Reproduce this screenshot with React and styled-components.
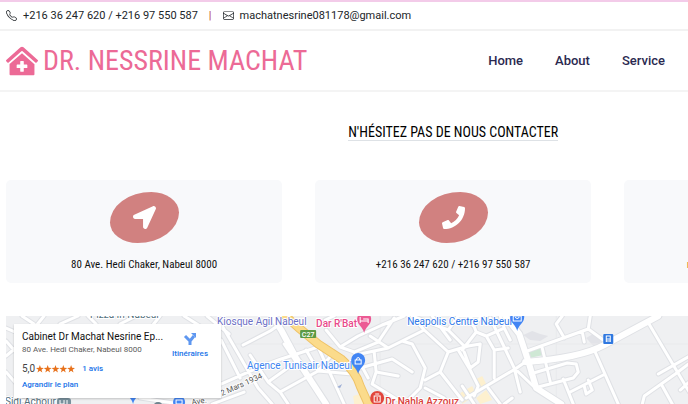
import React from "react";
import styled, { createGlobalStyle } from "styled-components";
import { FaClinicMedical, FaLocationArrow, FaPhone, FaEnvelope } from "react-icons/fa";
import { BsTelephone, BsEnvelope } from "react-icons/bs";

const condensed = `"Roboto Condensed", "Liberation Sans Narrow", Roboto, sans-serif`;

const GlobalStyle = createGlobalStyle`
  *, *::before, *::after { box-sizing: border-box; }
  body { margin: 0; background: #fff; color: #111; font-family: Roboto, sans-serif; }
  a { color: inherit; text-decoration: none; }
`;

const Page = styled.div`
  overflow: hidden;
  border-top: 2px solid #f3cbe9;
`;

const TopBar = styled.address`
  display: flex;
  align-items: center;
  height: 29px;
  padding: 0 6px;
  border-bottom: 2px solid #f2f2f2;
  font-size: 11px;
  font-style: normal;
  color: #212529;
  white-space: nowrap;
`;

const ContactLink = styled.a`
  display: flex;
  align-items: center;
  gap: 6px;
`;

const Divider = styled.span`
  margin: 0 11px;
  color: #b5443c;
`;

const Header = styled.header`
  display: flex;
  align-items: center;
  height: 61px;
  padding: 0 6px;
  border-bottom: 2px solid #f4f4f4;
  white-space: nowrap;
`;

const Brand = styled.a`
  display: flex;
  flex: 0 0 auto;
  align-items: center;
  gap: 5px;
  color: #ec6a96;
  font-family: ${condensed};
  font-size: 28px;
  line-height: 36px;
`;

const Nav = styled.nav`
  display: flex;
  gap: 32px;
  margin-left: auto;
  padding-right: 17px;
  color: #2b2950;
  font-size: 13px;
  font-weight: 500;
`;

const Content = styled.main`
  width: 130vw;
  margin-left: 6px;
`;

const Title = styled.h1`
  width: fit-content;
  margin: 32px auto 39px;
  border-bottom: 1px solid #dee2e6;
  font-family: ${condensed};
  font-size: 14px;
  font-weight: 400;
  line-height: 16px;
  color: #000;
`;

const Cards = styled.div`
  display: grid;
  grid-template-columns: repeat(3, 1fr);
  gap: 33px;
`;

const Card = styled.a`
  display: flex;
  flex-direction: column;
  align-items: center;
  gap: 14px;
  padding: 12px 12px 11px;
  border-radius: 5px;
  background: #f8f9fb;
  color: ${(p) => p.$color || "#111"};
  font-family: ${condensed};
  font-size: 11px;
  line-height: 15px;
`;

const Blob = styled.span`
  display: flex;
  align-items: center;
  justify-content: center;
  width: 69px;
  height: 51px;
  border-radius: 60% 40%;
  background: #d18180;
  color: #fff;
  font-size: 23px;
`;

const MapFrame = styled.section`
  position: relative;
  margin-top: 33px;
  background: #eff0f2;
`;

const MapArt = styled.svg`
  display: block;
  width: 100%;
  height: 88px;
  font-family: Roboto, sans-serif;
  font-size: 10px;
  font-weight: 400;
`;

const PlaceCard = styled.div`
  position: absolute;
  top: 8px;
  left: 8px;
  display: flex;
  justify-content: space-between;
  width: 207px;
  height: 74px;
  padding: 6px 13px 0 8px;
  background: #fff;
  box-shadow: 0 1px 2px rgba(0, 0, 0, 0.2);
  font-size: 8px;
  white-space: nowrap;
`;

const PlaceName = styled.h2`
  margin: 0;
  color: #111;
  font-size: 10px;
  font-weight: 400;
  line-height: 13px;
`;

const PlaceText = styled.p`
  margin: 0;
  color: #5b5b5b;
  line-height: 14px;
`;

const Rating = styled.div`
  display: flex;
  align-items: center;
  margin-top: 4px;
  color: #444;
  font-size: 10px;
  line-height: 16px;
`;

const Stars = styled.svg`
  width: 39px;
  height: 8px;
  margin: 0 7px 0 1px;
  fill: #e7711b;
`;

const MapLink = styled.a`
  color: #1a73e8;
  font-size: 8px;
  font-weight: 500;
  line-height: 16px;
`;

const Directions = styled(MapLink)`
  display: flex;
  flex-direction: column;
  align-items: center;
  padding-top: 2px;
`;

const STAR = "M4 0 5 2.8 8 2.9 5.6 4.7 6.5 7.6 4 5.9 1.5 7.6 2.4 4.7 0 2.9 3 2.8Z";

const minorRoads = [
  "M6 356L24 341 44 316M22 316L34 324M60 324L78 316M6 341L28 366 16 404M6 372L34 404",
  "M88 316L96 324M120 324L136 316M160 316L152 326M184 316L200 326M34 340L6 328",
  "M221 324L258 388 272 404M221 340L240 378M221 384L262 366 281 359 318 347M207 316L229 334",
  "M243 345L270 331 283 322M250 355L268 382 296 362M268 382L280 392 318 371 352 374",
  "M280 392L288 404M296 362L284 344M318 347L344 404M318 371L306 350M334 352L318 371",
  "M326 330L340 347 358 336 382 325 404 316M340 347L354 352 378 342 394 318M325 320L334 316",
  "M360 354L388 348 402 341 412 344 425 368 420 388 404 404M388 348L370 336M402 341L424 330 412 316",
  "M360 368L392 359 412 372M374 352L376 372 372 384 398 400M376 372L398 376M354 352L368 378",
  "M424 330L448 352 468 346 480 344 478 362 470 368 464 352M448 352L440 372 425 380M432 316L450 340",
  "M440 372L462 400M425 388L444 398M412 316L448 330 464 346M448 330L458 316 480 316",
  "M458 350L470 370 478 386 474 396M473 326L482 316M470 316L476 332 462 350M476 332L486 336 494 350 508 348",
  "M486 336L504 328 500 316M490 318L503 345 514 368 520 392M504 328L510 340M494 350L494 378",
  "M466 398L515 369 525 362M488 388L500 404M462 386L474 404M514 368L535 388M504 404L512 398",
  "M527 351L588 329 590 316M588 329L603 340M556 324L564 338M582 332L584 342M556 324L562 316",
  "M542 348L550 382M530 374L567 363 576 364 578 372 573 378 538 387M563 379L573 404M570 392L603 375M584 386L586 394 592 390 588 380",
  "M594 350L618 404M647 321L689 392M658 374L700 350M642 404L644 396 675 374 700 355M662 386L672 404",
  "M680 390L700 372M6 398L48 404M140 398L180 404M212 404L244 392",
];

const minorPath = minorRoads.join("");
const mainPath =
  "M272 316L281 330 296 358 326 404M505 316L519 334 528 361 536 388 561 404M525 362Q580 358 604 345T658 316";

function Pin({ x, y, color, children }) {
  return (
    <g transform={`translate(${x} ${y})`}>
      <path d="M0 13C-1 7-7 5-7-1A7 7 0 0 1 7-1C7 5 1 7 0 13Z" fill={color} />
      {children}
    </g>
  );
}

function CityMap() {
  return (
    <MapArt viewBox="6 316 894 88" preserveAspectRatio="xMinYMin slice" role="img" aria-label="Plan de Nabeul">
      <path d="M523 335L532 331 540 334 548 336 540 341 530 340ZM586 338L596 332 603 340 594 347Z" fill="#e2e3e8" />
      <path d="M527 352L541 348 543 355 529 358Z" fill="#cfe8d5" />
      <path d="M460 393L472 386 476 395 462 404ZM476 398L486 390 492 400 480 404ZM474 380L482 376 486 384 478 389ZM353 396L366 392 370 404H354Z" fill="#fdf0cf" />
      <path d="M221 344H900M556 316V404M380 316V404" stroke="#e9eaec" fill="none" />
      <g fill="none" strokeLinejoin="round" strokeLinecap="round">
        <path d={minorPath} stroke="#dfe1e5" strokeWidth="5" />
        <path d={mainPath} stroke="#dfe1e5" strokeWidth="8" />
        <path d={minorPath} stroke="#fff" strokeWidth="3" />
        <path d={mainPath} stroke="#fff" strokeWidth="6" />
        <path d="M283 314L300 329 318 344 341 359Q356 372 360 386L369 406" stroke="#efc368" strokeWidth="9" />
        <path d="M283 314L300 329 318 344 341 359Q356 372 360 386L369 406" stroke="#fbdb8b" strokeWidth="7" />
      </g>
      <rect x="300" y="330" width="16" height="8" rx="1" fill="#5c9a45" />
      <text x="308" y="337" textAnchor="middle" fontSize="7" fontWeight="500" fill="#fff">C27</text>

      <g stroke="#fff" strokeWidth="2" paintOrder="stroke" strokeLinejoin="round">
        <text x="90" y="318" fill="#54707c">Pizza In Nabeul</text>
        <text x="217" y="325" fill="#6b6fc5">Kiosque Agil Nabeul</text>
        <text x="316" y="327" fontWeight="500" fill="#e8498a">Dar R'Bat</text>
        <text x="407" y="325" fill="#2f78e8">Neapolis Centre Nabeul</text>
        <text x="247" y="369" fill="#3c84f0">Agence Tunisair Nabeul</text>
        <text x="5" y="405" fill="#546e7a">Sidi Achour</text>
        <text x="385" y="405" fontWeight="500" fill="#d9413b">Dr Nahla Azzouz</text>
        <text transform="translate(192 405) rotate(-10)" fontSize="8" fill="#555">Ave.</text>
        <text transform="translate(222 396) rotate(-24)" fontSize="8" fill="#555">2 Mars 1934</text>
      </g>

      <Pin x={364} y={320} color="#ec5a94">
        <path d="M-4-3V3M-4 1H4V3M-1-1H4V1" fill="none" stroke="#fff" />
      </Pin>
      <Pin x={517} y={318} color="#4285f4">
        <path d="M-4-2H4V3H-4ZM-2-1Q0 2 2-1" fill="none" stroke="#fff" />
      </Pin>
      <Pin x={358} y={361} color="#4285f4">
        <path d="M-3-1H3V3H-3ZM-2-1Q0-6 2-1" fill="none" stroke="#fff" />
      </Pin>
      <Pin x={133} y={391} color="#4285f4" />
      <circle cx="179" cy="402" r="6" fill="#4285f4" />
      <path d="M176 400H182V404H176Z" fill="none" stroke="#fff" />
      <circle cx="158" cy="407" r="5" fill="#70858f" />
      <rect x="57" y="398" width="14" height="8" rx="3" fill="#78909c" />
      <path d="M60 400V404H64V400M67 400V404" fill="none" stroke="#fff" />
      <circle cx="377" cy="398" r="7" fill="#e2453c" />
      <path d="M374 396H380V402H374ZM375 394H379M377 397V401" fill="none" stroke="#fff" />
      <path d="M337 387L342 384 340 388Z" fill="#9caed5" />
      <rect x="603" y="334" width="10" height="10" rx="1" fill="#2f78e0" />
      <path d="M606 336H610V341H606ZM606 339H610M606 341V342M610 341V342" fill="none" stroke="#fff" />
    </MapArt>
  );
}

const cards = [
  { icon: FaLocationArrow, text: "80 Ave. Hedi Chaker, Nabeul 8000", href: "#map" },
  { icon: FaPhone, text: "+216 36 247 620 / +216 97 550 587", href: "tel:+21636247620" },
  { icon: FaEnvelope, text: "machatnesrine081178@gmail.com", href: "mailto:machatnesrine081178@gmail.com", color: "#e58a2c" },
];

export default function App() {
  return (
    <Page>
      <GlobalStyle />
      <TopBar>
        <ContactLink href="tel:+21636247620">
          <BsTelephone size={11} />
          +216 36 247 620 / +216 97 550 587
        </ContactLink>
        <Divider>|</Divider>
        <ContactLink href="mailto:machatnesrine081178@gmail.com">
          <BsEnvelope size={11} />
          machatnesrine081178@gmail.com
        </ContactLink>
      </TopBar>
      <Header>
        <Brand href="#home">
          <FaClinicMedical size={32} />
          DR. NESSRINE MACHAT
        </Brand>
        <Nav>
          <a href="#home">Home</a>
          <a href="#about">About</a>
          <a href="#service">Service</a>
        </Nav>
      </Header>
      <Content>
        <Title>N'HÉSITEZ PAS DE NOUS CONTACTER</Title>
        <Cards>
          {cards.map(({ icon: Icon, text, href, color }) => (
            <Card key={text} href={href} $color={color}>
              <Blob><Icon /></Blob>
              {text}
            </Card>
          ))}
        </Cards>
        <MapFrame id="map">
          <CityMap />
          <PlaceCard>
            <div>
              <PlaceName>Cabinet Dr Machat Nesrine Ep...</PlaceName>
              <PlaceText>80 Ave. Hedi Chaker, Nabeul 8000</PlaceText>
              <Rating>
                5,0
                <Stars viewBox="0 0 40 8" aria-label="5 étoiles">
                  {[0, 8, 16, 24, 32].map((x) => (
                    <path key={x} d={STAR} transform={`translate(${x} 0)`} />
                  ))}
                </Stars>
                <MapLink href="#avis">1 avis</MapLink>
              </Rating>
              <MapLink href="#plan">Agrandir le plan</MapLink>
            </div>
            <Directions href="#itineraire">
              <svg width="14" height="14" viewBox="0 0 14 14" aria-hidden="true">
                <path d="M7 13V9L2 4M7 9L11 4" fill="none" stroke="#5e97f0" strokeWidth="3" />
                <path d="M8 1H13V6Z" fill="#5e97f0" />
              </svg>
              Itinéraires
            </Directions>
          </PlaceCard>
        </MapFrame>
      </Content>
    </Page>
  );
}
